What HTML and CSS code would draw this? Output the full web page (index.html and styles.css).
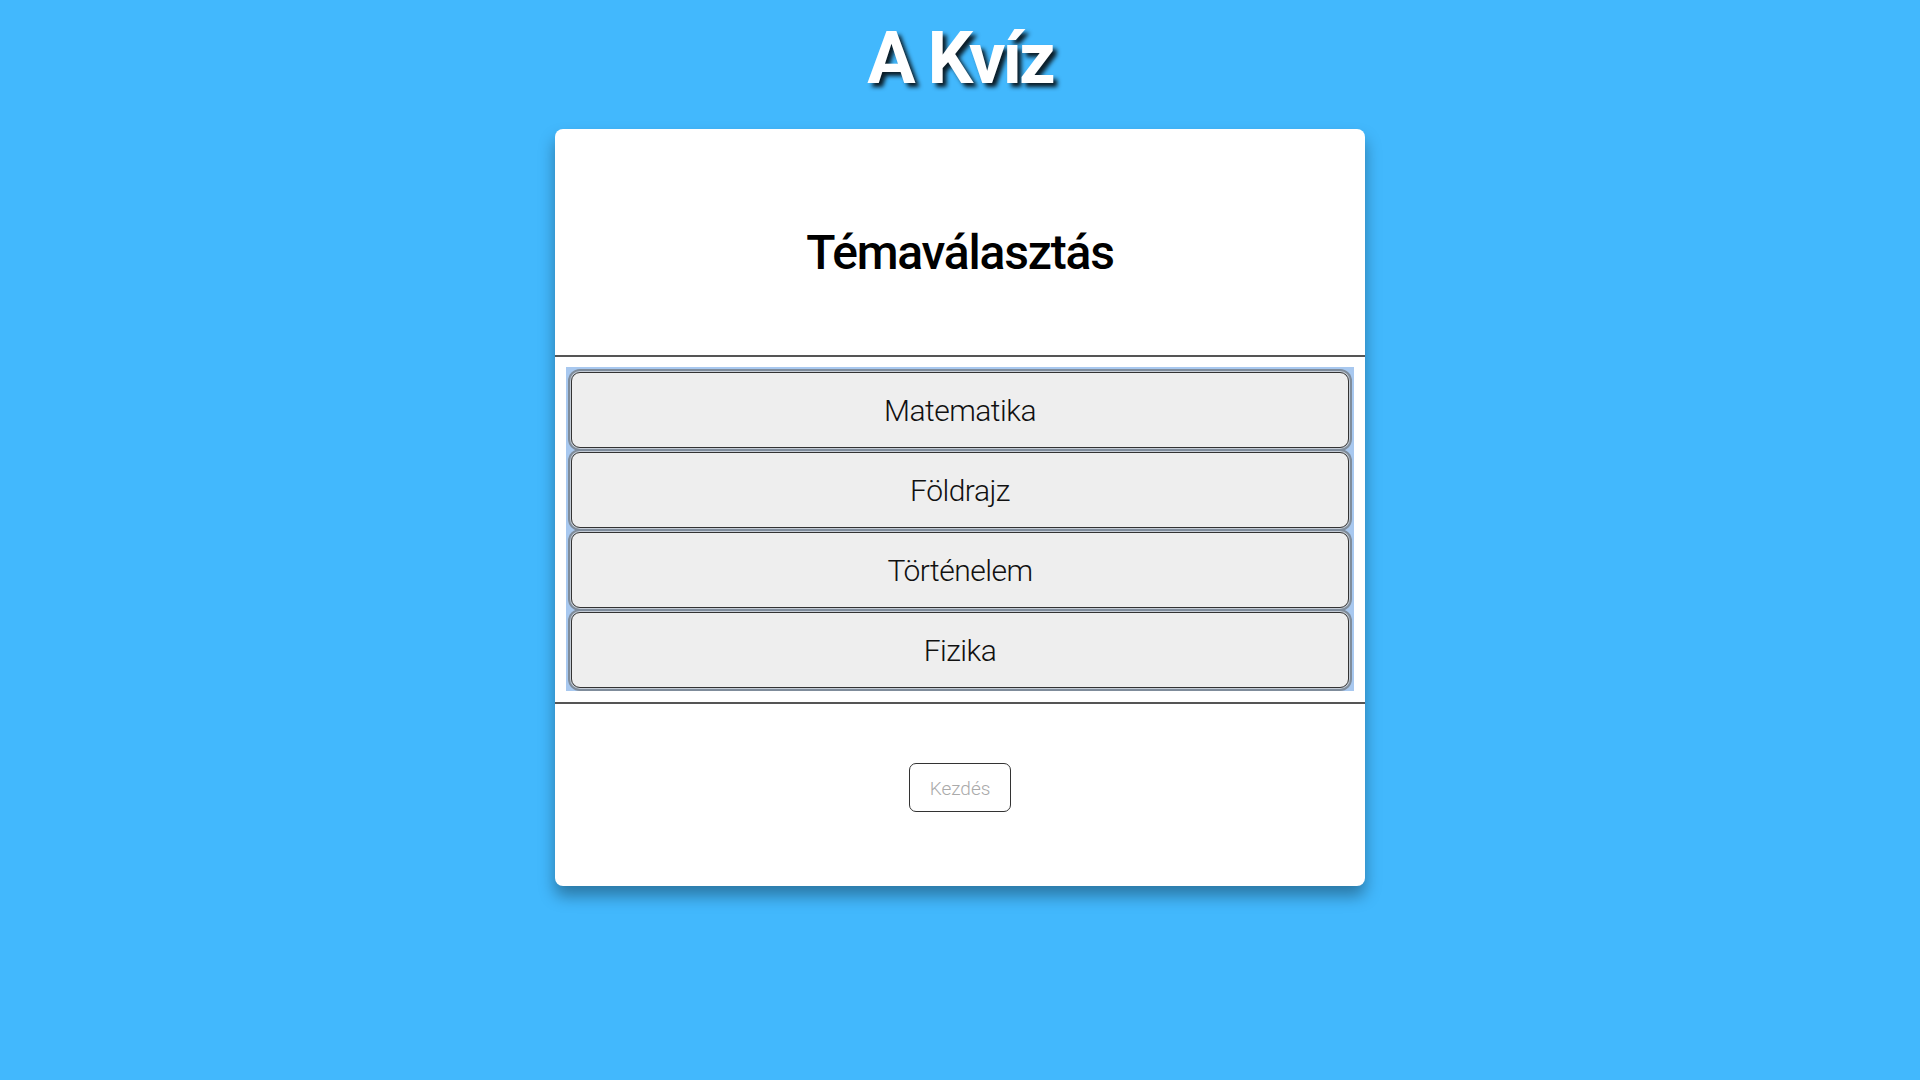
FILE: index.html
```html
<!DOCTYPE html>
<html lang="hu">
<head>
<meta charset="utf-8">
<title>A Kvíz</title>
<link rel="stylesheet" href="styles.css">
</head>
<body>
<h1 class="site-title">A Kvíz</h1>
<main class="card">
  <section class="card-head">
    <h2 class="card-title">Témaválasztás</h2>
  </section>
  <section class="card-list">
    <div class="topics">
      <button class="topic">Matematika</button>
      <button class="topic">Földrajz</button>
      <button class="topic">Történelem</button>
      <button class="topic">Fizika</button>
    </div>
  </section>
  <section class="card-foot">
    <button class="start" disabled>Kezdés</button>
  </section>
</main>
</body>
</html>
```

FILE: styles.css
```css
html, body {
  margin: 0;
  padding: 0;
}
body {
  background: #42b8fd;
  font-family: Roboto, "DejaVu Sans", sans-serif;
  min-height: 1080px;
}
.site-title {
  margin: 0;
  padding-top: 14px;
  height: 115px;
  box-sizing: border-box;
  text-align: center;
  color: #fff;
  font-size: 72px;
  font-weight: 700;
  line-height: 90px;
  letter-spacing: -3px;
  text-shadow: 4px 4px 4px rgba(0, 0, 0, 0.85);
}
.card {
  width: 810px;
  margin: 14px auto 0;
  background: #fff;
  border-radius: 8px;
  box-shadow: 0 10px 16px rgba(0, 0, 0, 0.35);
  overflow: hidden;
}
.card-head {
  height: 226px;
  display: flex;
  align-items: center;
  justify-content: center;
  border-bottom: 2px solid #555;
}
.card-title {
  margin: 0;
  font-size: 48px;
  font-weight: 500;
  letter-spacing: -1.2px;
  color: #000;
  padding-top: 20px;
}
.card-list {
  padding: 10px 11px 11px;
  border-bottom: 2px solid #555;
}
.topics {
  background: #a8c8ef;
  padding: 5px 5px 3px;
  display: flex;
  flex-direction: column;
  gap: 4px;
}
.topic {
  height: 76px;
  margin: 0;
  background: #eeeeee;
  border: 1px solid #333;
  border-radius: 9px;
  box-shadow: 0 0 0 1px #c4ccd6, 0 0 0 3px #7f8c9b;
  font-family: inherit;
  font-size: 30px;
  font-weight: 300;
  letter-spacing: -0.5px;
  color: #111;
  padding: 0;
}
.card-foot {
  height: 182px;
  display: flex;
  justify-content: center;
  align-items: flex-start;
  padding-top: 59px;
  box-sizing: border-box;
}
.start {
  width: 102px;
  height: 49px;
  background: #fff;
  border: 1px solid #333;
  border-radius: 7px;
  font-family: inherit;
  font-size: 19px;
  font-weight: 300;
  color: #aaa;
  padding: 2px 0 0;
}
```
